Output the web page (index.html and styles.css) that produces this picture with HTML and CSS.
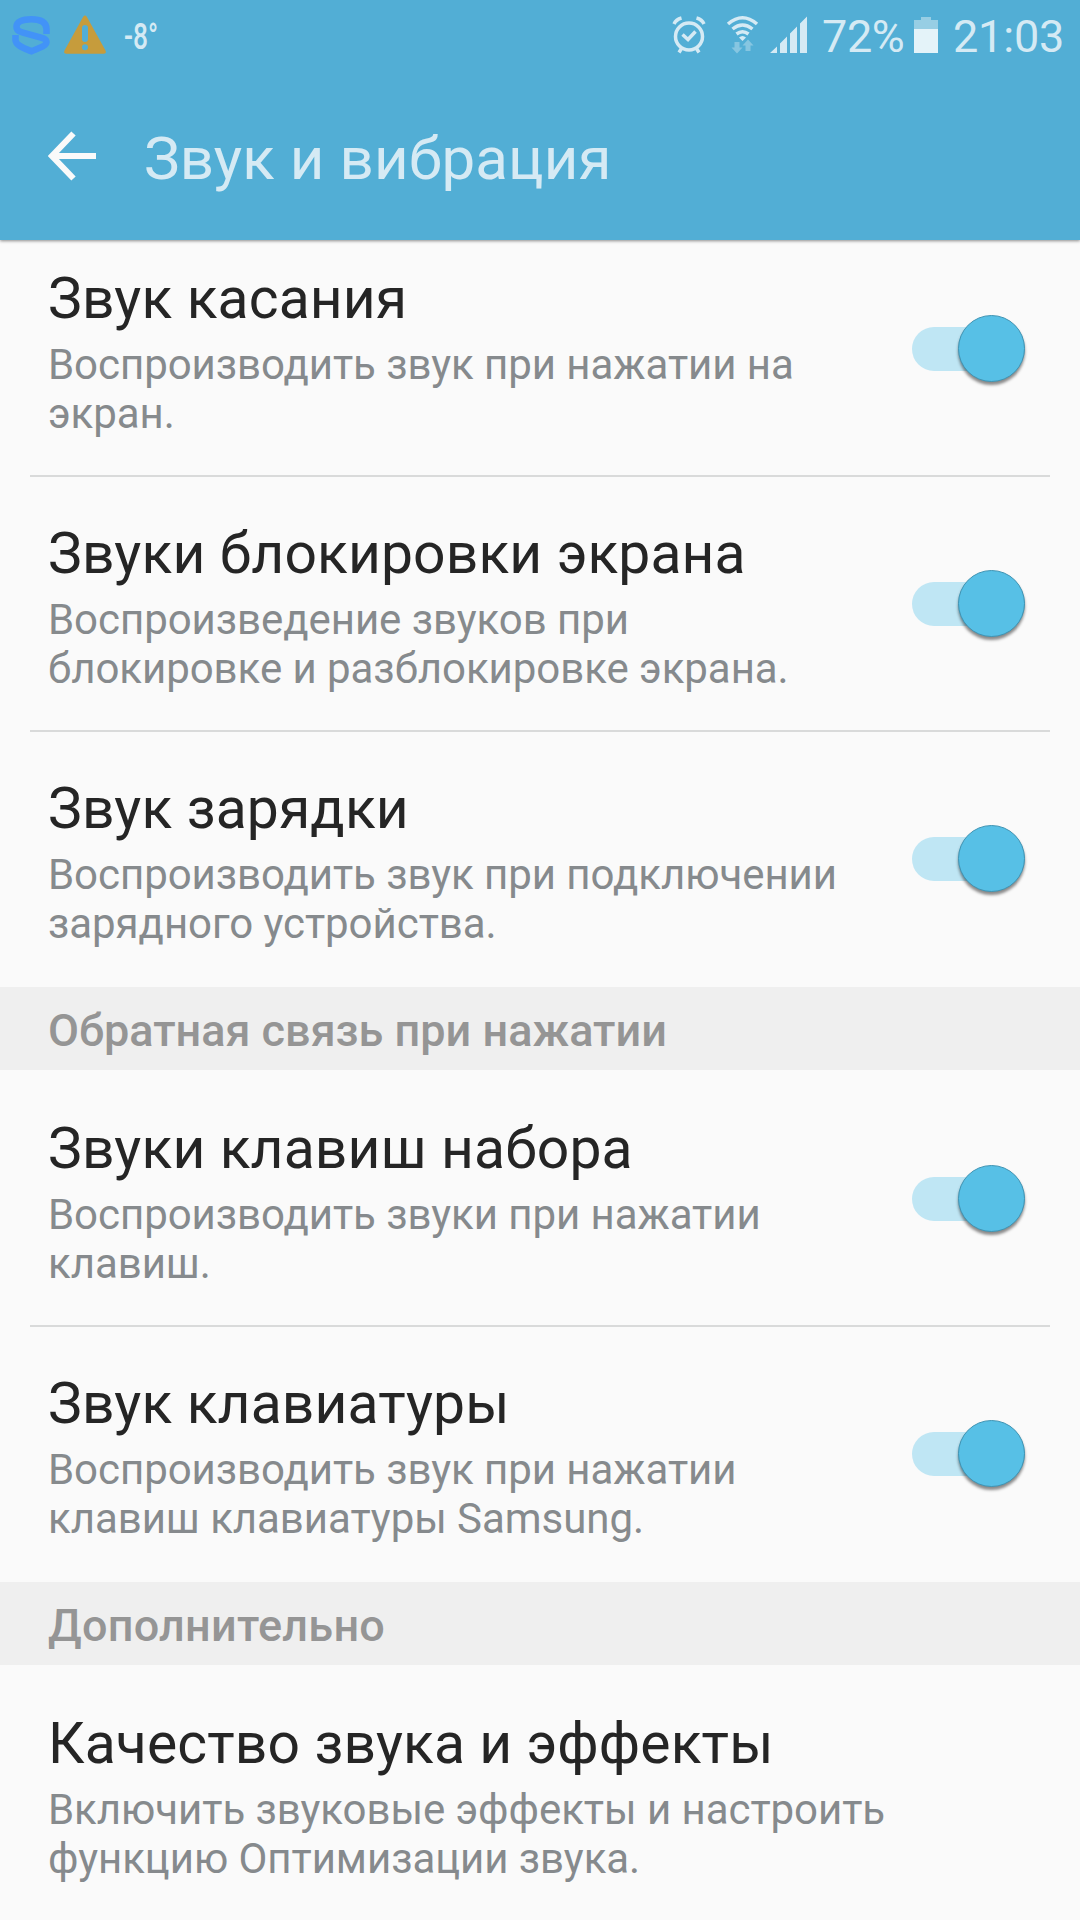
FILE: index.html
```html
<!DOCTYPE html>
<html lang="ru">
<head>
  <meta charset="UTF-8">
  <meta name="viewport" content="width=device-width, initial-scale=1.0">
  <title>Звук и вибрация</title>
  <link rel="stylesheet" href="styles.css">
</head>
<body>
  <!-- Status bar -->
  <div class="status-bar">
    <svg class="status-left" width="170" height="72" viewBox="0 0 170 72">
      <path class="s-logo" d="M46.500 34V29C46.500 22 41 19.200 31.500 19.200C22 19.200 16.500 22 16.500 26.500C16.500 30.500 19 31.500 23 32.600L41 37.700C45 38.800 46.500 39.500 46.500 42C46.500 46 38 48.500 31.500 51.300C25 48.500 15.500 45.500 15.500 40V35"/>
      <path class="warning" fill-rule="evenodd" d="M83.200 16.800Q85 14.200 86.800 16.800L105.500 50.500Q106.800 53.700 103.500 53.700H66.500Q63.200 53.700 64.500 50.500ZM82 28V39Q82 42 85 42T88 39V28Q88 25 85 25T82 28ZM85 44.300A3 3 0 1 0 85 50.300A3 3 0 1 0 85 44.300Z"/>
      <text class="temp" x="124" y="49" textLength="34" lengthAdjust="spacingAndGlyphs">-8°</text>
    </svg>
    <div class="status-right">
      <svg width="150" height="72" viewBox="670 0 150 72">
        <g class="status-line">
          <circle cx="689" cy="36.500" r="13.500"/>
          <path d="M682.500 34.500L688 39.500L695.500 31.500M681.500 48.500L679 52.500M696.500 48.500L699 52.500"/>
          <path d="M674 24Q676 19.500 681.500 18M704 24Q702 19.500 696.500 18"/>
          <path d="M728 24Q742.500 11.500 757 24M732.500 29Q742.500 21 752.500 29M736.500 34Q742.500 29.500 748.500 34"/>
        </g>
        <path class="status-fill" d="M739 37.500Q742.500 34.500 746 37.500L742.500 41Z"/>
        <path class="status-dim" d="M734.500 42H739.500V47.500H742.500L737 53.500L731.500 47.500H734.500ZM745.500 51V45.500H742.500L748 39.500L753.500 45.500H750.500V51Z"/>
        <path class="status-fill" d="M770 53H777V46.500ZM780 53H787V36.500L780 43.500ZM790 53H797V26.500L790 33.500ZM800 53H807V16.500L800 23.500Z"/>
      </svg>
      <span class="percent">72%</span>
      <svg class="battery" width="24" height="72" viewBox="914 0 24 72">
        <path class="battery-empty" d="M914 20H921V17H931V20H938V29H914Z"/>
        <path class="battery-full" d="M914 29H938V53H914Z"/>
      </svg>
      <span class="clock">21:03</span>
    </div>
  </div>

  <!-- App bar -->
  <header class="app-bar">
    <svg class="back" width="48" height="50" viewBox="0 0 48 50">
      <path d="M25.500 2.500L4 25L25.500 47.500M4 25H48"/>
    </svg>
    <h1>Звук и вибрация</h1>
  </header>

  <!-- Settings list, scrolled a little under the app bar -->
  <main class="list">
    <div class="item first">
      <div class="text">
        <h2>Звук касания</h2>
        <p>Воспроизводить звук при нажатии на экран.</p>
      </div>
      <div class="switch"><span class="thumb"></span></div>
    </div>
    <div class="item">
      <div class="text">
        <h2>Звуки блокировки экрана</h2>
        <p>Воспроизведение звуков при блокировке и разблокировке экрана.</p>
      </div>
      <div class="switch"><span class="thumb"></span></div>
    </div>
    <div class="item last">
      <div class="text">
        <h2>Звук зарядки</h2>
        <p>Воспроизводить звук при подключении зарядного устройства.</p>
      </div>
      <div class="switch"><span class="thumb"></span></div>
    </div>

    <h3>Обратная связь при нажатии</h3>
    <div class="item">
      <div class="text">
        <h2>Звуки клавиш набора</h2>
        <p>Воспроизводить звуки при нажатии клавиш.</p>
      </div>
      <div class="switch"><span class="thumb"></span></div>
    </div>
    <div class="item last">
      <div class="text">
        <h2>Звук клавиатуры</h2>
        <p>Воспроизводить звук при нажатии клавиш клавиатуры Samsung.</p>
      </div>
      <div class="switch"><span class="thumb"></span></div>
    </div>

    <h3 class="more">Дополнительно</h3>
    <div class="item last">
      <div class="text">
        <h2>Качество звука и эффекты</h2>
        <p>Включить звуковые эффекты и настроить функцию Оптимизации звука.</p>
      </div>
    </div>
  </main>
</body>
</html>
```
FILE: styles.css
```css
* {
  box-sizing: border-box;
}

body {
  display: flex;
  flex-direction: column;
  width: 1080px;
  height: 1920px;
  margin: 0;
  overflow: hidden;
  font-family: Roboto, sans-serif;
  background-color: #fafafa;
  color: #252525;
}

h1, h2, h3, p {
  margin: 0;
  font-weight: 400;
}

svg {
  display: block;
  flex: none;
}

/* Status bar */
.status-bar {
  display: flex;
  flex: none;
  justify-content: space-between;
  height: 72px;
  background-color: #52aed5;
  color: #d5eaf4;
  z-index: 2;
}

.status-left {
  overflow: visible;
}

.status-right {
  display: flex;
  width: 410px;
  font-size: 45px;
  line-height: 74px;
}

.percent {
  width: 91px;
  margin-left: 2px;
  letter-spacing: -0.4px;
  white-space: nowrap;
}

.battery {
  margin-left: 1px;
}

.clock {
  margin-left: 15px;
  letter-spacing: -0.2px;
}

.s-logo {
  fill: none;
  stroke: #4293f7;
  stroke-width: 6.5;
}

.warning {
  fill: #c69c3c;
}

.temp {
  font-size: 37px;
  font-weight: 500;
  fill: #d5eaf4;
}

.status-fill {
  fill: #d5eaf4;
}

.status-line {
  fill: none;
  stroke: #d5eaf4;
  stroke-width: 3.5;
}

.status-dim {
  fill: #86c6e1;
}

.battery-empty {
  fill: #97cee4;
}

.battery-full {
  fill: #e4f3f9;
}

/* App bar */
.app-bar {
  display: flex;
  flex: none;
  align-items: center;
  gap: 48px;
  height: 168px;
  padding-left: 48px;
  background-color: #52aed5;
  box-shadow: 0 1px 3px rgba(0, 0, 0, 0.45);
  z-index: 1;
}

.app-bar h1 {
  padding-top: 5px;
  font-size: 60px;
  line-height: 70px;
  letter-spacing: 0.1px;
  color: #d5eaf4;
}

.back {
  fill: none;
  stroke: #fafafa;
  stroke-width: 6;
}

/* Settings list */
.list {
  flex: none;
}

.item {
  display: flex;
  gap: 44px;
  height: 255px;
  margin: 0 30px;
  padding: 43px 25px 0 18px;
  border-bottom: 2px solid #d9dada;
}

.first {
  margin-top: -18px;
}

.last {
  border-bottom: none;
}

.text {
  flex: 1;
}

.item h2 {
  font-size: 57px;
  line-height: 67px;
  letter-spacing: 0.12px;
}

.item p {
  max-width: 940px;
  margin-top: 8px;
  font-size: 42px;
  line-height: 49px;
  letter-spacing: -0.05px;
  color: #868a8d;
}

.switch {
  display: flex;
  flex: none;
  align-items: center;
  justify-content: flex-end;
  width: 113px;
  height: 44px;
  margin-top: 62px;
  border-radius: 22px;
  background-color: #bfe6f4;
}

.thumb {
  flex: none;
  width: 67px;
  height: 67px;
  margin-bottom: 2px;
  border: 1px solid #3f94b4;
  border-radius: 50%;
  background-color: #57c0e6;
  box-shadow: 0 3px 3px rgba(0, 0, 0, 0.45);
}

h3 {
  height: 83px;
  margin-bottom: 2px;
  padding: 17px 48px 0;
  font-size: 45px;
  font-weight: 500;
  line-height: 53px;
  background-color: #efefef;
  color: #959595;
}

.more {
  letter-spacing: 0.25px;
}
```
